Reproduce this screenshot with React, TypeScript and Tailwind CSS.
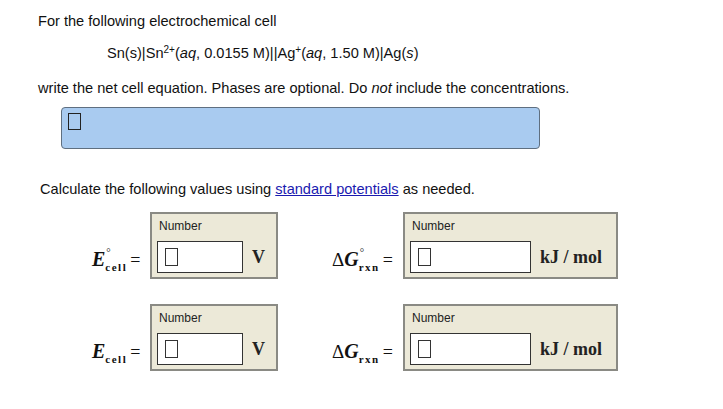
function Cursor() {
  return <div className="w-[13px] h-[18px] border border-[#333]" />
}

function Panel({ width, inputWidth, unit }: { width: string; inputWidth: string; unit: string }) {
  return (
    <div className={`${width} h-[67px] border-2 border-[#8a8a84] bg-[#ece9d8] pl-[5px] pt-[5px]`}>
      <div className="pl-[2px] text-[12px] leading-[14px] text-[#222]">Number</div>
      <div className="mt-[8px] flex items-center">
        <div className={`${inputWidth} h-[32px] border border-[#333] bg-white pl-[7px] pt-[6px]`}>
          <Cursor />
        </div>
        <div className="ml-[9px] font-['Liberation_Serif',serif] text-[18px] font-bold text-[#222]">{unit}</div>
      </div>
    </div>
  )
}

function Label({ sym, sub, degree, delta }: { sym: string; sub: string; degree: boolean; delta?: boolean }) {
  return (
    <div className="flex items-baseline font-['Liberation_Serif',serif] leading-[20px] text-[#111]">
      {delta && <span className="text-[19px]">Δ</span>}
      <span className="text-[20px] font-bold italic">{sym}</span>
      <span className="relative top-[5px] text-[11px] font-bold tracking-[1.5px]">
        {degree && <span className="absolute left-[1px] top-[-15px] text-[11px] font-normal">°</span>}
        {sub}
      </span>
      <span className="ml-[3px] text-[18px]">=</span>
    </div>
  )
}

function Row({ degree, top }: { degree: boolean; top: string }) {
  return (
    <div className={`${top} flex items-start`}>
      <div className="ml-[92px] w-[58px] pt-[37px]">
        <Label sym="E" sub="cell" degree={degree} />
      </div>
      <Panel width="w-[128px]" inputWidth="w-[86px]" unit="V" />
      <div className="ml-[54px] w-[71px] pt-[37px]">
        <Label sym="G" sub="rxn" degree={degree} delta />
      </div>
      <Panel width="w-[215px]" inputWidth="w-[121px]" unit="kJ / mol" />
    </div>
  )
}

export default function App() {
  return (
    <div className="w-[723px] h-[409px] overflow-hidden bg-white font-['Liberation_Sans',Arial,sans-serif] text-[14.6px] leading-[17px] text-[#111]">
      <p className="pl-[38px] pt-[13px]">For the following electrochemical cell</p>
      <p className="pl-[107px] mt-[15px]">
        Sn(s)|Sn<sup className="text-[10px]">2+</sup>(<i>aq</i>, 0.0155 M)||Ag<sup className="text-[10px]">+</sup>(<i>aq</i>, 1.50 M)|Ag(<i>s</i>)
      </p>
      <p className="pl-[38px] mt-[18px]">
        write the net cell equation. Phases are optional. Do <i>not</i> include the concentrations.
      </p>
      <div className="ml-[61px] mt-[10px] w-[479px] h-[42px] rounded-[4px] border border-[#5f6f80] bg-[#a9cbf0] pl-[6px] pt-[5px]">
        <div className="w-[13px] h-[17px] border border-[#222]" />
      </div>
      <p className="pl-[40px] mt-[32px]">
        Calculate the following values using{" "}
        <a href="#" className="text-[#1a1ab0] underline">standard potentials</a> as needed.
      </p>
      <Row degree={true} top="mt-[14px]" />
      <Row degree={false} top="mt-[25px]" />
    </div>
  )
}
